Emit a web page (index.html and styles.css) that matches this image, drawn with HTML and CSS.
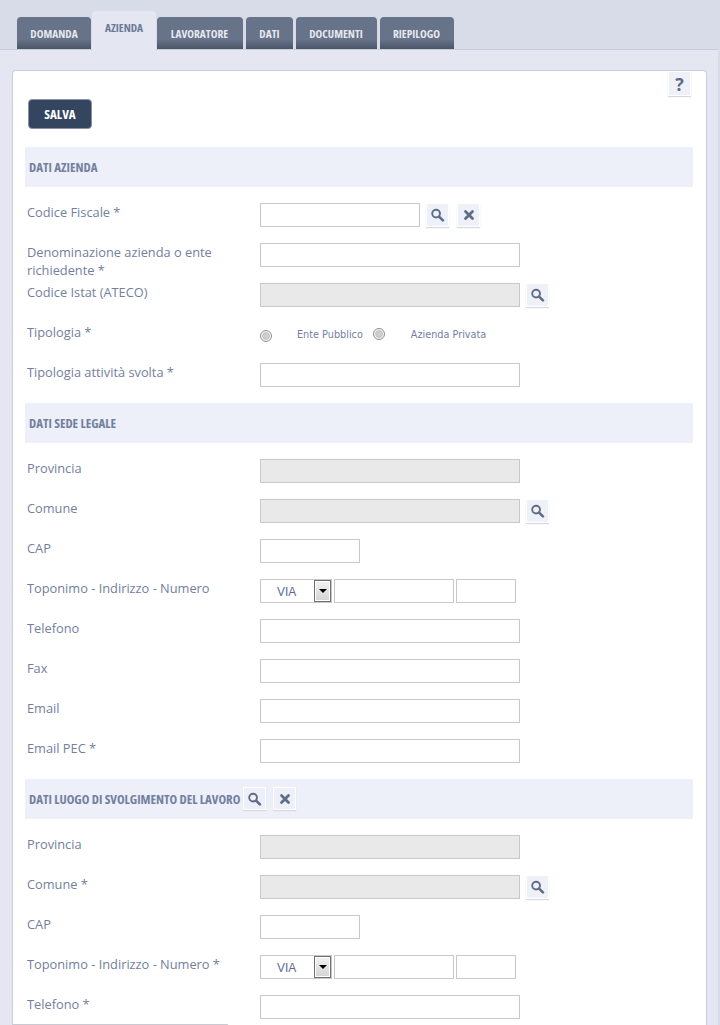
FILE: index.html
```html
<!DOCTYPE html>
<html lang="it">
<head>
<meta charset="utf-8">
<title>Azienda</title>
<link rel="stylesheet" href="styles.css">
</head>
<body>
<svg class="defs" width="0" height="0">
  <symbol id="i-search" viewBox="0 0 14 14"><circle cx="5.1" cy="5.6" r="3.9" fill="none" stroke="currentColor" stroke-width="1.9"/><path d="M8.1 8.6 11.9 12.4" fill="none" stroke="currentColor" stroke-width="2.6" stroke-linecap="round"/></symbol>
  <symbol id="i-x" viewBox="0 0 14 14"><path d="M3.5 3.5 10.5 10.5M10.5 3.5 3.5 10.5" fill="none" stroke="currentColor" stroke-width="2.8" stroke-linecap="round"/></symbol>
</svg>
<div class="page">
  <nav class="tabs">
    <a class="tab w-domanda">DOMANDA</a>
    <a class="tab active">AZIENDA</a>
    <a class="tab w-lav">LAVORATORE</a>
    <a class="tab w-dati">DATI</a>
    <a class="tab w-doc">DOCUMENTI</a>
    <a class="tab w-riep">RIEPILOGO</a>
  </nav>
  <main class="panel">
    <div class="card">
      <span class="help">?</span>
      <div class="form">
        <div class="toolbar"><button class="save" type="button">SALVA</button></div>

        <h2 class="section">DATI AZIENDA</h2>
        <div class="row"><label class="label">Codice Fiscale *</label><div class="field"><input class="input w160"><span class="ibtn first"><svg class="ico"><use href="#i-search"/></svg></span><span class="ibtn"><svg class="ico"><use href="#i-x"/></svg></span></div></div>
        <div class="row"><label class="label">Denominazione azienda o ente richiedente *</label><div class="field"><input class="input w260"></div></div>
        <div class="row"><label class="label">Codice Istat (ATECO)</label><div class="field"><input class="input w260 off" disabled><span class="ibtn first"><svg class="ico"><use href="#i-search"/></svg></span></div></div>
        <div class="row"><label class="label">Tipologia *</label><div class="field radios"><span class="radio r1"></span><span class="rtext t1">Ente Pubblico</span><span class="radio r2"></span><span class="rtext t2">Azienda Privata</span></div></div>
        <div class="row"><label class="label">Tipologia attività svolta *</label><div class="field"><input class="input w260"></div></div>

        <h2 class="section">DATI SEDE LEGALE</h2>
        <div class="row"><label class="label">Provincia</label><div class="field"><input class="input w260 off" disabled></div></div>
        <div class="row"><label class="label">Comune</label><div class="field"><input class="input w260 off" disabled><span class="ibtn first"><svg class="ico"><use href="#i-search"/></svg></span></div></div>
        <div class="row"><label class="label">CAP</label><div class="field"><input class="input w100"></div></div>
        <div class="row"><label class="label">Toponimo - Indirizzo - Numero</label><div class="field addr"><div class="select"><span class="sval">VIA</span><span class="sarrow"></span></div><input class="input w120"><input class="input w60"></div></div>
        <div class="row"><label class="label">Telefono</label><div class="field"><input class="input w260"></div></div>
        <div class="row"><label class="label">Fax</label><div class="field"><input class="input w260"></div></div>
        <div class="row"><label class="label">Email</label><div class="field"><input class="input w260"></div></div>
        <div class="row"><label class="label">Email PEC *</label><div class="field"><input class="input w260"></div></div>

        <h2 class="section">DATI LUOGO DI SVOLGIMENTO DEL LAVORO<span class="ibtn sfirst"><svg class="ico"><use href="#i-search"/></svg></span><span class="ibtn"><svg class="ico"><use href="#i-x"/></svg></span></h2>
        <div class="row"><label class="label">Provincia</label><div class="field"><input class="input w260 off" disabled></div></div>
        <div class="row"><label class="label">Comune *</label><div class="field"><input class="input w260 off" disabled><span class="ibtn first"><svg class="ico"><use href="#i-search"/></svg></span></div></div>
        <div class="row"><label class="label">CAP</label><div class="field"><input class="input w100"></div></div>
        <div class="row"><label class="label">Toponimo - Indirizzo - Numero *</label><div class="field addr"><div class="select"><span class="sval">VIA</span><span class="sarrow"></span></div><input class="input w120"><input class="input w60"></div></div>
        <div class="row last"><label class="label">Telefono *</label><div class="field"><input class="input w260"></div></div>
      </div>
      <div class="endline"></div>
    </div>
  </main>
</div>
</body>
</html>
```
FILE: styles.css
```css
* { box-sizing: border-box; }
html, body { margin: 0; padding: 0; height: 1025px; overflow: hidden; }
body { background: #d8dce8; font-family: "Open Sans", sans-serif; color: #72809e; }
.defs { position: absolute; }
.page { height: 1025px; overflow: hidden; }

.tabs { display: flex; align-items: flex-end; gap: 3px; height: 49px; padding-left: 17px; }
.tab {
  display: flex; justify-content: center; align-items: center;
  height: 32px; padding-top: 1px;
  background: linear-gradient(#677388 0, #677388 70%, #4b5568 100%);
  border-radius: 4px 4px 0 0;
  color: #e6e9f0;
  font: bold 11.4px "Open Sans", sans-serif; font-stretch: 75%;
}
.w-domanda { width: 74px; }
.w-lav { width: 86px; padding-right: 1px; }
.w-dati { width: 47px; }
.w-doc { width: 81px; padding-right: 1px; }
.w-riep { width: 74px; padding-right: 1px; }
.tab.active {
  width: 64px; height: 39px; margin: 0 -2px -1px; padding: 0 0 6px;
  background: #e4e7f1; color: #6c7a98; position: relative; z-index: 1;
}

.panel { width: 718px; height: 976px; padding: 20px 11px 0 12px; background: #e4e7f1; border-top: 1px solid #c8cdde; }
.card { position: relative; width: 695px; height: 955px; padding: 0 13px 0 12px; background: #fff; border: 1px solid #c8cdde; border-bottom: 0; border-radius: 4px 4px 0 0; }
.help {
  position: absolute; top: 0; right: 15px; width: 23px; height: 25px;
  display: flex; justify-content: center; align-items: center;
  background: #eef1f8; border: 1px solid #fff; box-shadow: 0 1px 1px #d5d8e2;
  color: #5f6c86; font: bold 18px "Open Sans", sans-serif;
}

.toolbar { height: 76px; padding: 28px 0 0 3px; }
.save {
  display: block; width: 64px; height: 30px; padding: 0;
  background: #34455f; border: 1px solid #8a93a5; border-radius: 4px;
  color: #fff; font: bold 13px "Open Sans", sans-serif; font-stretch: 75%;
}

.section {
  display: flex; align-items: center; height: 40px; margin: 0; padding-left: 4px;
  background: #edf0f8; color: #72809e;
  font: bold 12.9px "Open Sans", sans-serif; font-stretch: 75%;
}
.section + .row { margin-top: 16px; }

.row { display: flex; height: 40px; }
.row.last { height: 29px; }
.label { flex: none; width: 235px; padding: 0 24px 0 2px; font-size: 12.8px; line-height: 18px; color: #72809e; }
.field { display: flex; align-items: flex-start; }

.input { display: block; height: 24px; margin: 0; padding: 0 4px; background: #fff; border: 1px solid #c8c8c8; border-radius: 0; outline: 0; }
.input.off { background: #e9e9e9; }
.w260 { width: 260px; }
.w160 { width: 160px; }
.w120 { width: 120px; }
.w100 { width: 100px; }
.w60 { width: 60px; }

.ibtn {
  flex: none; display: inline-flex; justify-content: center; align-items: center;
  width: 23px; height: 24px; margin-left: 8px;
  background: #eef1f8; border: 1px solid #fff; box-shadow: 0 1px 1px #d5d8e2;
  color: #5f6c86;
}
.ibtn.first { margin-left: 6px; }
.ibtn.sfirst { margin-left: 3px; }
.ico { width: 14px; height: 14px; }
.section .ibtn { background: #edf0f8; height: 23px; margin-top: -1px; margin-left: 7px; }
.section .ibtn.sfirst { margin-left: 3px; }

.radios { width: 260px; height: 24px; }
.radio {
  flex: none; width: 12px; height: 12px; border-radius: 50%; border: 1px solid #8f8f8f;
  background: radial-gradient(circle at 50% 50%, #cfcfcf 0 25%, #c4c4c4 48%, #f6f6f6 62%, #ececec 100%);
}
.r1 { margin-top: 7px; }
.r2 { margin: 5px 0 0 10px; }
.rtext { font: 9.7px/1 "DejaVu Sans", sans-serif; color: #72809e; margin-top: 7px; white-space: nowrap; }
.t1 { margin-left: 25px; }
.t2 { margin-left: 26px; }

.addr { gap: 2px; }
.select { display: flex; width: 72px; height: 24px; background: #fff; border: 1px solid #c8c8c8; font: 12px "Liberation Sans", sans-serif; color: #5a6c90; }
.sval { width: 53px; padding: 5px 0 0 16px; }
.sarrow {
  position: relative; width: 17px; height: 22px;
  background: linear-gradient(#f2f2f2, #d4d4d4);
  border: 1px solid #707070; box-shadow: inset 0 0 0 1px #fff;
}
.sarrow::after {
  content: ""; position: absolute; left: 4px; top: 8px;
  border: 4px solid transparent; border-top: 4px solid #000; border-bottom: 0;
}

.endline { width: 215px; height: 1px; margin-left: -12px; background: #c8cad4; }
```
